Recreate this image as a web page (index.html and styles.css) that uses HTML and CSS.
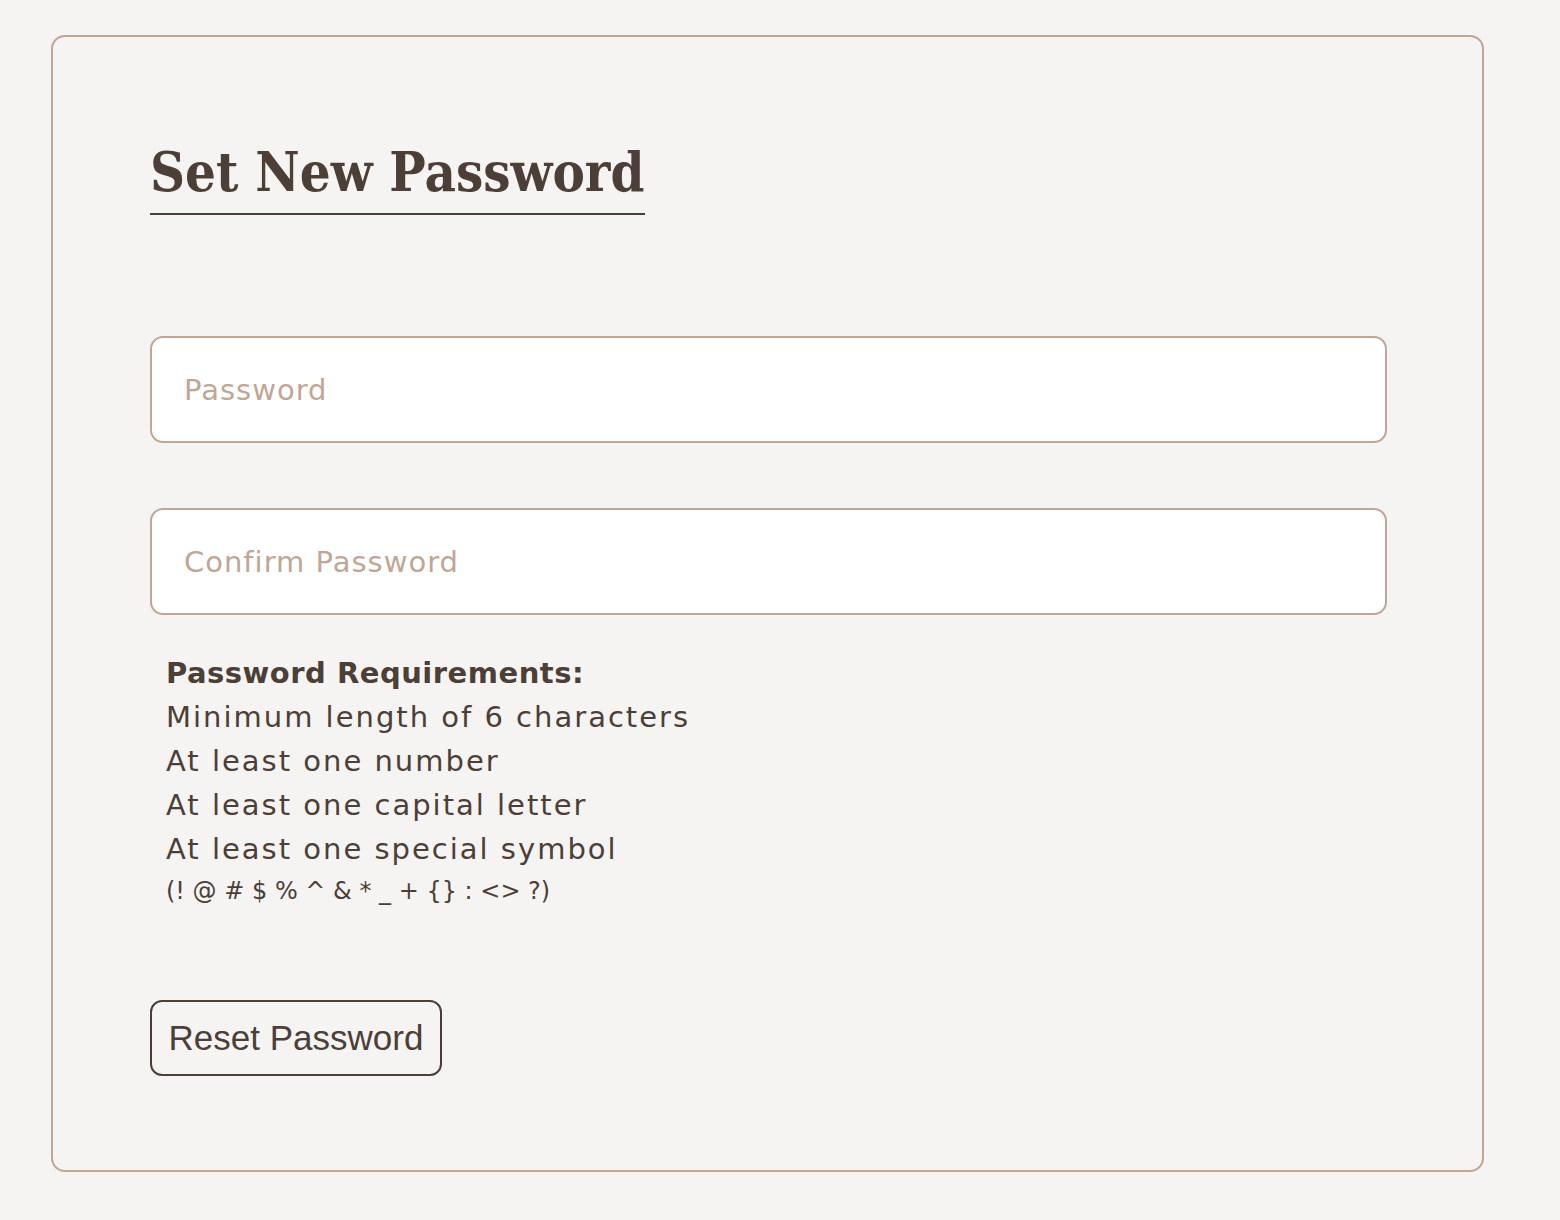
FILE: index.html
```html
<!DOCTYPE html>
<html>
<head>
<meta charset="utf-8">
<link rel="stylesheet" href="styles.css">
</head>
<body>
<div class="page">
  <div class="card">
    <h1 class="title">Set New Password</h1>
    <form class="form">
      <input class="field" type="password" placeholder="Password">
      <input class="field" type="password" placeholder="Confirm Password">
      <div class="reqs">
        <div class="reqs-head">Password Requirements:</div>
        <div class="req">Minimum length of 6 characters</div>
        <div class="req">At least one number</div>
        <div class="req">At least one capital letter</div>
        <div class="req">At least one special symbol</div>
        <div class="symbols">(! @ # $ % ^ &amp; * _ + {} : &lt;&gt; ?)</div>
      </div>
      <button class="btn" type="button">Reset Password</button>
    </form>
  </div>
</div>
</body>
</html>
```
FILE: styles.css
```css
html, body {
  margin: 0;
  padding: 0;
  background: #f6f4f2;
}
.page {
  padding: 35px 76px 47px 51px;
}
.card {
  border: 2px solid #bfa696;
  border-radius: 14px;
  padding: 102px 96px 96px 97px;
  height: 1137px;
  box-sizing: border-box;
  color: #4b3f38;
}
.title {
  display: inline-block;
  margin: 0;
  font-family: "DejaVu Serif Condensed", "DejaVu Serif", serif;
  font-weight: bold;
  font-size: 54px;
  line-height: 66px;
  padding: 0 1px 8px 0;
  border-bottom: 2px solid #4b3f38;
  color: #4b3f38;
}
.form {
  display: flex;
  flex-direction: column;
  margin-top: 121px;
}
.field {
  display: block;
  box-sizing: border-box;
  width: 1237px;
  height: 107px;
  border: 2px solid #bfa696;
  border-radius: 13px;
  background: #fff;
  padding: 0 32px;
  font-family: "DejaVu Sans", sans-serif;
  font-size: 29px;
  letter-spacing: 1px;
  color: #4b3f38;
  outline: none;
  margin: 0 0 65px 0;
}
.field::placeholder {
  color: #bfa696;
}
.field + .field {
  margin-bottom: 0;
}
.reqs {
  padding: 36px 0 0 16px;
  font-family: "DejaVu Sans", sans-serif;
  font-size: 29px;
  line-height: 44px;
  letter-spacing: 2px;
  color: #4b3f38;
}
.reqs-head {
  font-weight: bold;
  letter-spacing: 0.5px;
}
.symbols {
  font-size: 24px;
  line-height: 40px;
  letter-spacing: 0;
}
.btn {
  align-self: flex-start;
  margin-top: 89px;
  width: 292px;
  height: 76px;
  box-sizing: border-box;
  border: 2px solid #4b3f38;
  border-radius: 12px;
  background: transparent;
  font-family: "Liberation Sans", Arial, sans-serif;
  font-size: 35px;
  color: #4b3f38;
  padding: 0;
}
```
